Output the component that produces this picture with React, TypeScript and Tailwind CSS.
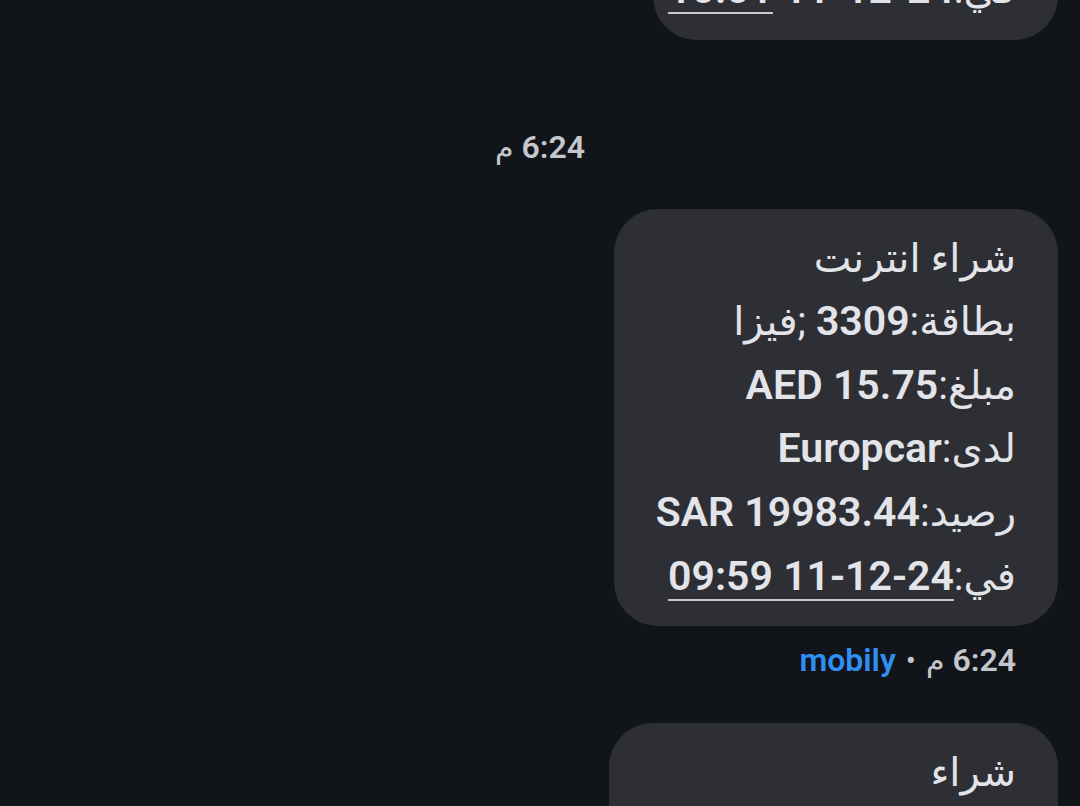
import React from 'react'

type Line = { label: string; value?: string; tail?: string; link?: boolean }

const font = { fontFamily: 'Roboto, "DejaVu Sans", sans-serif' }

function MessageLine({ line }: { line: Line }) {
  return (
    <div className="whitespace-nowrap">
      <span className="font-normal">{line.label}</span>
      {line.value && (
        <span
          className={
            line.link
              ? 'text-[41px] font-semibold underline decoration-2 decoration-[#c9cace] underline-offset-[9px]'
              : 'text-[41px] font-semibold'
          }
        >
          {line.value}
        </span>
      )}
      {line.tail && <span className="font-normal">{line.tail}</span>}
    </div>
  )
}

function Bubble({ lines, className = '' }: { lines: Line[]; className?: string }) {
  return (
    <div
      dir="rtl"
      className={`self-end rounded-[44px] bg-[#2d2f34] px-[42px] py-[18px] text-[40px] leading-[63.6px] text-[#e3e4e9] ${className}`}
    >
      {lines.map((l, i) => (
        <MessageLine key={i} line={l} />
      ))}
    </div>
  )
}

const purchase: Line[] = [
  { label: 'شراء انترنت' },
  { label: 'بطاقة:', value: '3309', tail: ' ;فيزا' },
  { label: 'مبلغ:', value: 'AED 15.75' },
  { label: 'لدى:', value: 'Europcar' },
  { label: 'رصيد:', value: 'SAR 19983.44' },
  { label: 'في:', value: '24-12-11 09:59', link: true },
]

const next: Line[] = [
  { label: 'شراء' },
  { label: 'بطاقة:', value: '3309', tail: ' ;فيزا' },
  { label: 'مبلغ:', value: 'SAR 34.50' },
  { label: 'لدى:', value: 'Careem Food' },
  { label: 'رصيد:', value: 'SAR 19948.94' },
]

export default function App() {
  return (
    <div className="h-[806px] w-[1080px] overflow-hidden bg-[#111418]" style={font}>
      <div className="flex flex-col pr-[22px]">
        {/* previous message, scrolled mostly out of view */}
        <div
          dir="rtl"
          className="-mt-[60px] w-[405px] self-end rounded-[44px] bg-[#2d2f34] px-[42px] py-[18px] text-[40px] leading-[63.6px] text-[#e3e4e9]"
        >
          <div className="whitespace-nowrap">
            <span>في:</span>
            <span className="text-[41px] font-semibold">24-12-11 </span>
            <span className="text-[41px] font-semibold underline decoration-2 decoration-[#c9cace] underline-offset-[9px]">
              10:01
            </span>
          </div>
        </div>

        <div dir="rtl" className="mt-[88px] pl-[22px] text-center text-[32px] leading-[38px] text-[#c5c7cc]">
          <span className="font-semibold">6:24</span> <span className="text-[30px]">م</span>
        </div>

        <Bubble lines={purchase} className="mt-[42px]" />

        <div
          dir="rtl"
          className="mt-[15px] mr-[42px] self-end text-[32px] leading-[38px] text-[#c5c7cc]"
        >
          <span className="font-semibold">6:24</span> <span className="text-[30px]">م</span>
          <span className="mx-[10px] text-[30px]">•</span>
          <span className="font-semibold text-[#2f8ff2]">mobily</span>
        </div>

        <Bubble lines={next} className="mt-[43px] w-[449px]" />
      </div>
    </div>
  )
}
